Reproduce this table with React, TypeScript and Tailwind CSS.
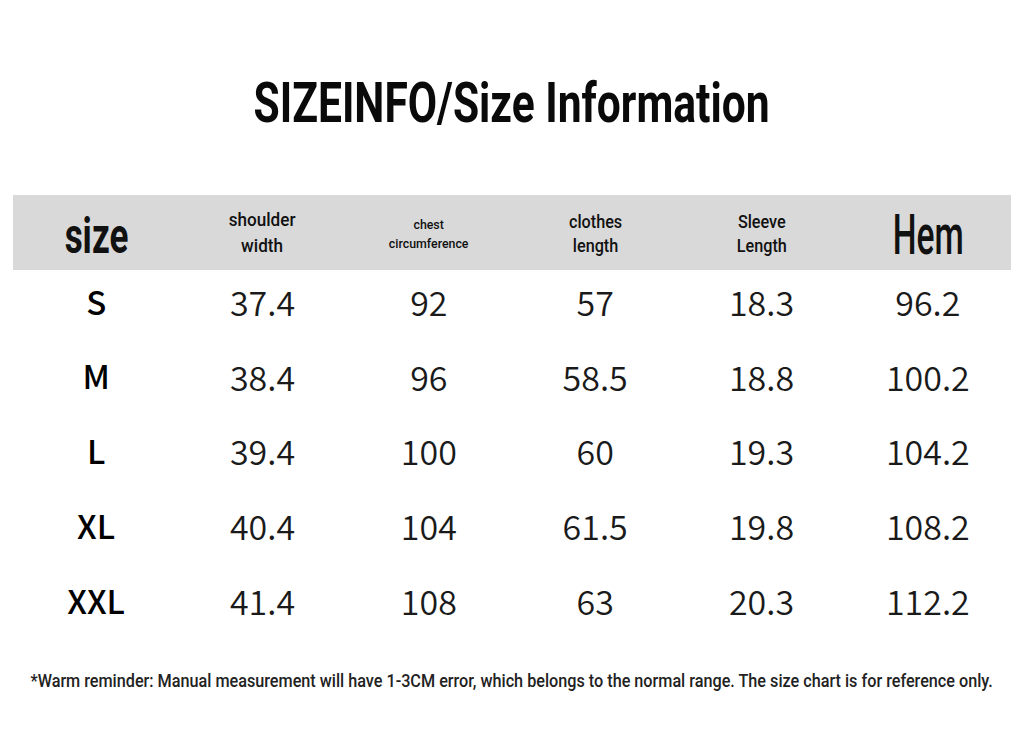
import React from 'react';

const narrow = { fontFamily: 'Roboto, "Liberation Sans", sans-serif' };
const cjk = { fontFamily: '"Noto Sans CJK SC", "Noto Sans", sans-serif' };

const rows = [
  ['S', '37.4', '92', '57', '18.3', '96.2'],
  ['M', '38.4', '96', '58.5', '18.8', '100.2'],
  ['L', '39.4', '100', '60', '19.3', '104.2'],
  ['XL', '40.4', '104', '61.5', '19.8', '108.2'],
  ['XXL', '41.4', '108', '63', '20.3', '112.2'],
];

export default function App() {
  return (
    <div className="w-[1024px] h-[754px] bg-white text-black overflow-hidden flex flex-col">
      {/* Title */}
      <div className="h-[195px] flex items-start justify-center pt-[70px]" style={narrow}>
        <h1 className="inline-block whitespace-nowrap text-[56px] leading-[66px] font-bold text-[#0a0a0a] scale-x-[0.76] origin-center">
          SIZEINFO/Size Information
        </h1>
      </div>

      {/* Header band */}
      <div className="mx-[13px] h-[75px] bg-[#d9d9d9] grid grid-cols-6 items-center text-center text-[#111]" style={narrow}>
        <div className="flex justify-center pt-[6px]">
          <span className="inline-block text-[50px] leading-none font-bold scale-x-[0.7]">size</span>
        </div>
        <div className="flex justify-center">
          <span className="inline-block text-[19px] leading-[26px] font-medium scale-x-[0.9]">shoulder<br />width</span>
        </div>
        <div className="flex justify-center pt-[5px]">
          <span className="inline-block text-[12px] leading-[19px] font-medium scale-x-[1.03]">chest<br />circumference</span>
        </div>
        <div className="flex justify-center pt-[3px]">
          <span className="inline-block text-[18px] leading-[24px] font-medium scale-x-[0.9]">clothes<br />length</span>
        </div>
        <div className="flex justify-center pt-[3px]">
          <span className="inline-block text-[18px] leading-[24px] font-medium scale-x-[0.9]">Sleeve<br />Length</span>
        </div>
        <div className="flex justify-center pt-[4px]">
          <span className="inline-block text-[56px] leading-none font-medium scale-x-[0.6]">Hem</span>
        </div>
      </div>

      {/* Rows */}
      <div className="mx-[13px] -mt-[6px] flex flex-col" style={cjk}>
        {rows.map((r) => (
          <div key={r[0]} className="h-[74.75px] grid grid-cols-6 items-center text-center text-[34px] text-[#1a1a1a]">
            <div className="font-medium text-[33px] text-black">{r[0]}</div>
            {r.slice(1).map((v, i) => (
              <div key={i} className="font-[350]">{v}</div>
            ))}
          </div>
        ))}
      </div>

      {/* Footnote */}
      <div className="mt-[29px] flex justify-center" style={narrow}>
        <p className="inline-block whitespace-nowrap text-[18px] font-medium text-[#222] scale-x-[0.9]">
          *Warm reminder: Manual measurement will have 1-3CM error, which belongs to the normal range. The size chart is for reference only.
        </p>
      </div>
    </div>
  );
}
